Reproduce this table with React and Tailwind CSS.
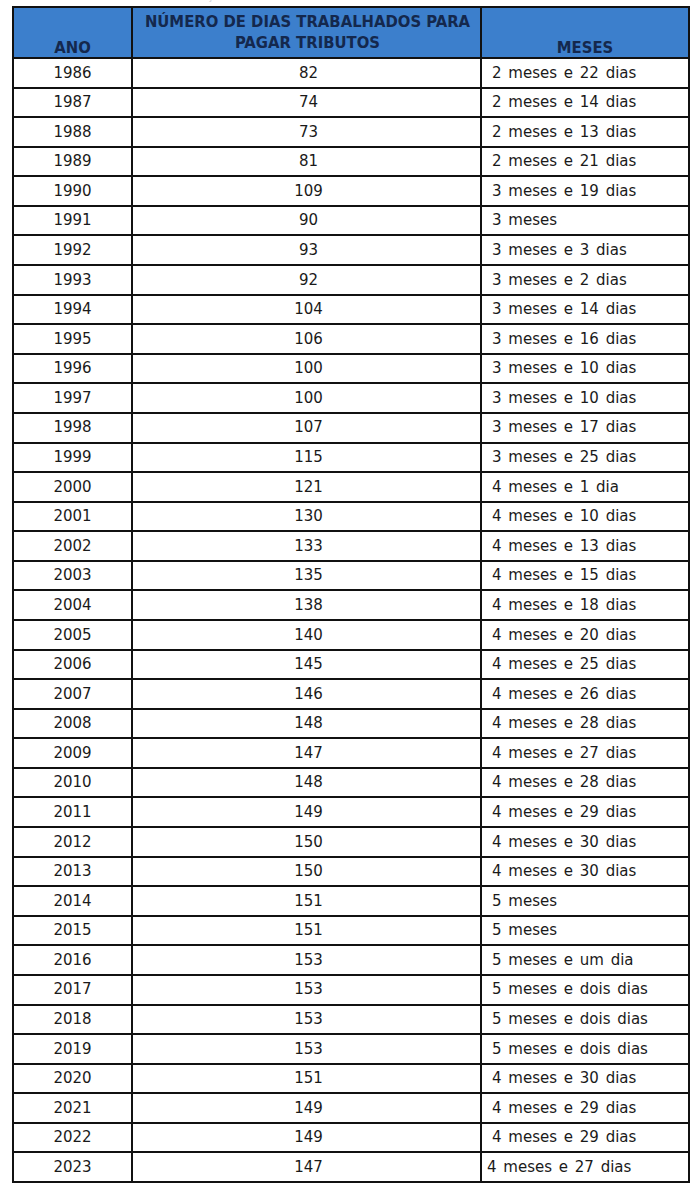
import React from "react";

const rows = [
  ["1986", "82", "2 meses e 22 dias"],
  ["1987", "74", "2 meses e 14 dias"],
  ["1988", "73", "2 meses e 13 dias"],
  ["1989", "81", "2 meses e 21 dias"],
  ["1990", "109", "3 meses e 19 dias"],
  ["1991", "90", "3 meses"],
  ["1992", "93", "3 meses e 3 dias"],
  ["1993", "92", "3 meses e 2 dias"],
  ["1994", "104", "3 meses e 14 dias"],
  ["1995", "106", "3 meses e 16 dias"],
  ["1996", "100", "3 meses e 10 dias"],
  ["1997", "100", "3 meses e 10 dias"],
  ["1998", "107", "3 meses e 17 dias"],
  ["1999", "115", "3 meses e 25 dias"],
  ["2000", "121", "4 meses e 1 dia"],
  ["2001", "130", "4 meses e 10 dias"],
  ["2002", "133", "4 meses e 13 dias"],
  ["2003", "135", "4 meses e 15 dias"],
  ["2004", "138", "4 meses e 18 dias"],
  ["2005", "140", "4 meses e 20 dias"],
  ["2006", "145", "4 meses e 25 dias"],
  ["2007", "146", "4 meses e 26 dias"],
  ["2008", "148", "4 meses e 28 dias"],
  ["2009", "147", "4 meses e 27 dias"],
  ["2010", "148", "4 meses e 28 dias"],
  ["2011", "149", "4 meses e 29 dias"],
  ["2012", "150", "4 meses e 30 dias"],
  ["2013", "150", "4 meses e 30 dias"],
  ["2014", "151", "5 meses"],
  ["2015", "151", "5 meses"],
  ["2016", "153", "5 meses e um dia"],
  ["2017", "153", "5 meses e dois dias"],
  ["2018", "153", "5 meses e dois dias"],
  ["2019", "153", "5 meses e dois dias"],
  ["2020", "151", "4 meses e 30 dias"],
  ["2021", "149", "4 meses e 29 dias"],
  ["2022", "149", "4 meses e 29 dias"],
  ["2023", "147", "4 meses e 27 dias"],
];

export default function App() {
  return (
    <div
      className="w-[700px] h-[1204px] bg-white overflow-hidden"
      style={{ fontFamily: '"DejaVu Sans", Verdana, sans-serif' }}
    >
      <div className="h-[6px] overflow-hidden relative">
        <div className="absolute left-[4px] top-[-10px] text-[10px] leading-[13px] text-gray-300 whitespace-nowrap">
          Fonte: IBPT – Instituto Brasileiro de Planejamento Tributário
        </div>
      </div>
      <table className="ml-[12px] w-[676px] table-fixed border-collapse text-[15px] text-[#1a1a1a]">
        <colgroup>
          <col className="w-[119px]" />
          <col className="w-[349px]" />
          <col className="w-[208px]" />
        </colgroup>
        <thead>
          <tr
            className="bg-[#3c7fcc] text-[#14284d] h-[51px] text-[16.5px]"
            style={{ fontFamily: '"DejaVu Sans Condensed", "DejaVu Sans", sans-serif' }}
          >
            <th className="border-2 border-[#111] align-bottom p-0 pb-[1px] font-bold leading-[17px]">ANO</th>
            <th className="border-2 border-[#111] align-top p-0 pt-[3px] pl-[2px] font-bold leading-[21px]">
              NÚMERO DE DIAS TRABALHADOS PARA
              <br />
              PAGAR TRIBUTOS
            </th>
            <th className="border-2 border-[#111] align-bottom p-0 pb-[1px] font-bold leading-[17px]">MESES</th>
          </tr>
        </thead>
        <tbody>
          {rows.map(([ano, dias, meses], i) => (
            <tr key={ano} className="h-[29.58px]">
              <td className="border-2 border-[#111] text-center p-0">{ano}</td>
              <td className="border-2 border-[#111] text-center p-0 pl-[4px]">{dias}</td>
              <td
                className={
                  i === rows.length - 1
                    ? "border-2 border-[#111] p-0 pl-[5px] whitespace-nowrap [word-spacing:2px]"
                    : "border-2 border-[#111] p-0 pl-[10px] whitespace-nowrap [word-spacing:2px]"
                }
              >
                {meses}
              </td>
            </tr>
          ))}
        </tbody>
      </table>
    </div>
  );
}
